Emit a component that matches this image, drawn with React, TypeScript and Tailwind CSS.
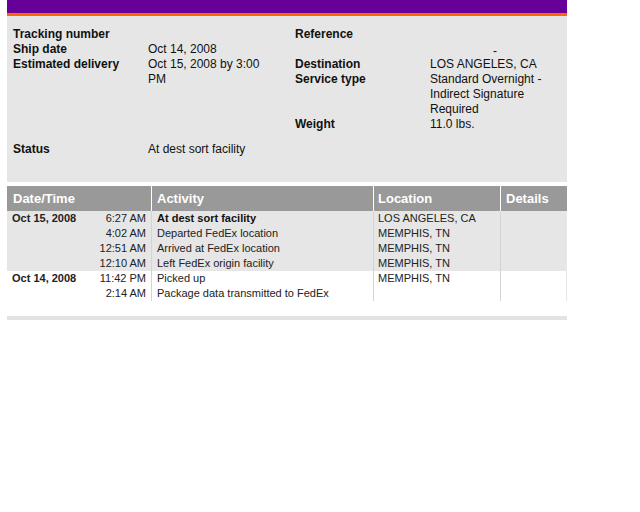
import React from "react";

const font = { fontFamily: '"Liberation Sans", Arial, sans-serif' };

type Ev = { time: string; act: string; loc: string; bold?: boolean };
const groups: { date: string; bg: string; evs: Ev[] }[] = [
  {
    date: "Oct 15, 2008",
    bg: "bg-[#e6e6e6]",
    evs: [
      { time: "6:27 AM", act: "At dest sort facility", loc: "LOS ANGELES, CA", bold: true },
      { time: "4:02 AM", act: "Departed FedEx location", loc: "MEMPHIS, TN" },
      { time: "12:51 AM", act: "Arrived at FedEx location", loc: "MEMPHIS, TN" },
      { time: "12:10 AM", act: "Left FedEx origin facility", loc: "MEMPHIS, TN" },
    ],
  },
  {
    date: "Oct 14, 2008",
    bg: "bg-white",
    evs: [
      { time: "11:42 PM", act: "Picked up", loc: "MEMPHIS, TN" },
      { time: "2:14 AM", act: "Package data transmitted to FedEx", loc: "" },
    ],
  },
];

export default function App() {
  return (
    <div className="min-h-[512px] w-[640px] bg-white" style={font}>
      <div className="ml-[7px] w-[560px]">
        <div className="h-[13px] bg-[#660099]" />
        <div className="h-[3px] bg-[#ff6600]" />
        <div className="bg-[#e6e6e6] pt-[11px] pb-[25px] pl-[6px] text-[12px] leading-[15px] text-[#111]">
          <div className="flex">
            <div className="grid w-[282px] grid-cols-[135px_126px] content-start">
              <div className="font-bold">Tracking number</div>
              <div></div>
              <div className="font-bold">Ship date</div>
              <div>Oct 14, 2008</div>
              <div className="font-bold">Estimated delivery</div>
              <div>Oct 15, 2008 by 3:00 PM</div>
            </div>
            <div className="grid grid-cols-[135px_130px] content-start">
              <div className="font-bold">Reference</div>
              <div></div>
              <div></div>
              <div className="translate-y-[2px] text-center">-</div>
              <div className="font-bold">Destination</div>
              <div>LOS ANGELES, CA</div>
              <div className="font-bold">Service type</div>
              <div>Standard Overnight - Indirect Signature Required</div>
              <div className="font-bold">Weight</div>
              <div>11.0 lbs.</div>
            </div>
          </div>
          <div className="mt-[10px] grid grid-cols-[135px_200px]">
            <div className="font-bold">Status</div>
            <div>At dest sort facility</div>
          </div>
        </div>
        <div className="h-[4px]" />
        <div className="grid h-[25px] grid-cols-[145px_222px_127px_66px] bg-[#999999] text-[13px] font-bold leading-[25px] text-white">
          <div className="border-r border-white pl-[6px]">Date/Time</div>
          <div className="border-r border-white pl-[5px]">Activity</div>
          <div className="border-r border-white pl-[4px]">Location</div>
          <div className="pl-[5px]">Details</div>
        </div>
        {groups.map((g) => (
          <div
            key={g.date}
            className={`grid grid-cols-[145px_222px_127px_66px] text-[11px] leading-[15px] text-[#222] ${g.bg}`}
          >
            <div className="flex justify-between border-r border-[#d4d4d4] pl-[5px] pr-[5px]">
              <div className="font-bold">{g.date}</div>
              <div className="text-right">
                {g.evs.map((e, i) => (
                  <div key={i}>{e.time}</div>
                ))}
              </div>
            </div>
            <div className="border-r border-[#d4d4d4] pl-[5px]">
              {g.evs.map((e, i) => (
                <div key={i} className={e.bold ? "font-bold text-[#111]" : ""}>
                  {e.act}
                </div>
              ))}
            </div>
            <div className="border-r border-[#d4d4d4] pl-[4px]">
              {g.evs.map((e, i) => (
                <div key={i} className="h-[15px]">
                  {e.loc}
                </div>
              ))}
            </div>
            <div className="border-r border-[#e8e8e8]" />
          </div>
        ))}
        <div className="h-[15px]" />
        <div className="h-[4px] bg-[#e3e3e3]" />
      </div>
    </div>
  );
}
